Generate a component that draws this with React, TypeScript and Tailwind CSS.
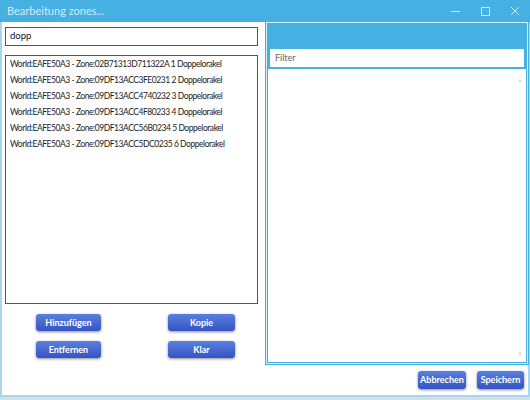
import React from "react";

const zones = [
  "World:EAFE50A3 - Zone:02B71313D711322A 1 Doppelorakel",
  "World:EAFE50A3 - Zone:09DF13ACC3FE0231 2 Doppelorakel",
  "World:EAFE50A3 - Zone:09DF13ACC4740232 3 Doppelorakel",
  "World:EAFE50A3 - Zone:09DF13ACC4F80233 4 Doppelorakel",
  "World:EAFE50A3 - Zone:09DF13ACC56B0234 5 Doppelorakel",
  "World:EAFE50A3 - Zone:09DF13ACC5DC0235 6 Doppelorakel",
];

function BlueButton({ label, className = "" }: { label: string; className?: string }) {
  return (
    <button
      className={`h-[17px] rounded-[3px] bg-gradient-to-b from-[#5b7fe0] to-[#3553c2] text-[9px] font-bold text-white whitespace-nowrap shadow-[0_1px_3px_rgba(0,0,0,0.45)] ${className}`}
      style={{ fontFamily: "Lato, 'Liberation Sans', sans-serif" }}
    >
      {label}
    </button>
  );
}

export default function App() {
  return (
    <div
      className="w-[530px] h-[400px] bg-[#d8dde3] overflow-hidden flex flex-col"
      style={{ fontFamily: "Lato, 'Noto Sans', sans-serif" }}
    >
      <div className="h-[397px] flex flex-col bg-white border-x-2 border-b-2 border-[#a9d6ee]">
        {/* Title bar */}
        <div className="h-[22px] -mx-[2px] bg-[#47b0e3] flex items-center pl-[7px] shrink-0">
          <span className="text-[11px] text-white/75">Bearbeitung zones...</span>
          <div className="ml-auto flex items-center h-full">
            <span className="w-[30px] flex justify-center">
              <span className="w-[9px] h-px bg-white/70" />
            </span>
            <span className="w-[30px] flex justify-center">
              <span className="w-[9px] h-[9px] border border-white/70" />
            </span>
            <span className="w-[30px] flex justify-center">
              <svg width="10" height="10" viewBox="0 0 10 10" stroke="rgba(255,255,255,0.75)" strokeWidth="1">
                <path d="M1 1L9 9M9 1L1 9" />
              </svg>
            </span>
          </div>
        </div>

        <div className="flex flex-1">
          {/* Left side */}
          <div className="w-[263px] flex flex-col pl-[3px] pt-[5px]">
            <div className="w-[253px] h-[19px] border border-[#555] flex items-center px-[4px] text-[9.5px] text-[#111]">
              dopp
            </div>
            <div className="mt-[9px] w-[253px] h-[249px] border border-[#555] pl-[4px] overflow-hidden">
              {zones.map((z) => (
                <div key={z} className="h-[16px] flex items-center whitespace-nowrap text-[8.5px] tracking-[-0.45px] text-[#222]">
                  {z}
                </div>
              ))}
            </div>
            <div className="grid grid-cols-2 gap-y-[10px] mt-[10px]">
              <BlueButton label="Hinzufügen" className="w-[65px] ml-[31px]" />
              <BlueButton label="Kopie" className="w-[67px] ml-[33px]" />
              <BlueButton label="Entfernen" className="w-[65px] ml-[31px]" />
              <BlueButton label="Klar" className="w-[67px] ml-[33px]" />
            </div>
          </div>

          {/* Right side */}
          <div className="flex-1 flex flex-col">
            <div className="h-[343px] bg-[#47b0e3] pl-[1px] pr-[1px] pb-[1px] -mr-[1px]">
              <div className="h-full border border-[#d6eefa] flex flex-col">
                <div className="h-[26px] bg-[#47b0e3]" />
                <div className="px-[3px] bg-[#47b0e3] pb-[2px]">
                  <div className="h-[18px] bg-white flex items-center px-[5px] text-[9px] text-[#666]">
                    Filter
                  </div>
                </div>
                <div className="flex-1 bg-white mx-[1px] mb-[1px] relative">
                  <span className="absolute right-[3px] top-[6px] text-[6px] text-[#ddd]">▲</span>
                  <span className="absolute right-[3px] bottom-[4px] text-[6px] text-[#ddd]">▼</span>
                </div>
              </div>
            </div>
            <div className="flex justify-end gap-[11px] pr-[4px] mt-[6px]">
              <BlueButton label="Abbrechen" className="w-[48px] h-[18px]" />
              <BlueButton label="Speichern" className="w-[47px] h-[18px]" />
            </div>
          </div>
        </div>
      </div>
    </div>
  );
}
